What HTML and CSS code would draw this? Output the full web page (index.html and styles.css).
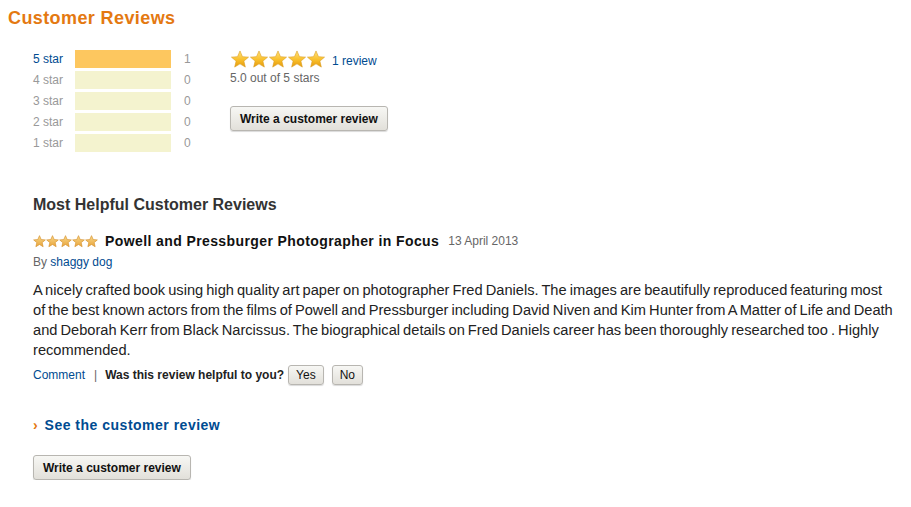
FILE: index.html
```html
<!DOCTYPE html>
<html lang="en">

<head>
    <meta charset="UTF-8">
    <title>Customer Reviews</title>
    <link rel="stylesheet" href="styles.css">
</head>

<body>
    <svg width="0" height="0" class="defs">
        <defs>
            <linearGradient id="star-big" x1="0" y1="0" x2="0" y2="1">
                <stop offset="0" stop-color="#ffe27a" />
                <stop offset="0.55" stop-color="#f9bf2b" />
                <stop offset="1" stop-color="#e39a0d" />
            </linearGradient>
            <linearGradient id="star-small" x1="0" y1="0" x2="0" y2="1">
                <stop offset="0" stop-color="#f8d98a" />
                <stop offset="1" stop-color="#e9a43c" />
            </linearGradient>
            <path id="star" d="M10 1 L12.6 7 L19 7.5 L14.1 11.7 L15.6 18 L10 14.6 L4.4 18 L5.9 11.7 L1 7.5 L7.4 7 Z" />
        </defs>
    </svg>

    <h1 class="title">Customer Reviews</h1>

    <div class="summary">
        <table class="histogram">
            <tr class="active">
                <td class="label"><a href="#">5 star</a></td>
                <td><div class="bar"><div class="fill" style="width: 100%"></div></div></td>
                <td class="count">1</td>
            </tr>
            <tr>
                <td class="label">4 star</td>
                <td><div class="bar"></div></td>
                <td class="count">0</td>
            </tr>
            <tr>
                <td class="label">3 star</td>
                <td><div class="bar"></div></td>
                <td class="count">0</td>
            </tr>
            <tr>
                <td class="label">2 star</td>
                <td><div class="bar"></div></td>
                <td class="count">0</td>
            </tr>
            <tr>
                <td class="label">1 star</td>
                <td><div class="bar"></div></td>
                <td class="count">0</td>
            </tr>
        </table>

        <div class="overall">
            <div class="overall-top">
                <svg class="stars-big" width="96" height="19" viewBox="0 0 100 20">
                    <use href="#star" x="0" fill="url(#star-big)" stroke="#d99a1a" stroke-width="0.6" />
                    <use href="#star" x="20" fill="url(#star-big)" stroke="#d99a1a" stroke-width="0.6" />
                    <use href="#star" x="40" fill="url(#star-big)" stroke="#d99a1a" stroke-width="0.6" />
                    <use href="#star" x="60" fill="url(#star-big)" stroke="#d99a1a" stroke-width="0.6" />
                    <use href="#star" x="80" fill="url(#star-big)" stroke="#d99a1a" stroke-width="0.6" />
                </svg>
                <a href="#" class="review-count">1 review</a>
            </div>
            <div class="out-of">5.0 out of 5 stars</div>
            <button class="btn btn-large">Write a customer review</button>
        </div>
    </div>

    <h2 class="subtitle">Most Helpful Customer Reviews</h2>

    <div class="review">
        <div class="review-head">
            <svg class="stars-small" width="65" height="13" viewBox="0 0 100 20">
                <use href="#star" x="0" fill="url(#star-small)" stroke="#d58f2a" stroke-width="1" />
                <use href="#star" x="20" fill="url(#star-small)" stroke="#d58f2a" stroke-width="1" />
                <use href="#star" x="40" fill="url(#star-small)" stroke="#d58f2a" stroke-width="1" />
                <use href="#star" x="60" fill="url(#star-small)" stroke="#d58f2a" stroke-width="1" />
                <use href="#star" x="80" fill="url(#star-small)" stroke="#d58f2a" stroke-width="1" />
            </svg>
            <span class="review-title">Powell and Pressburger Photographer in Focus</span>
            <span class="review-date">13 April 2013</span>
        </div>
        <div class="byline">By <a href="#">shaggy dog</a></div>
        <p class="review-text">A nicely crafted book using high quality art paper on photographer Fred Daniels. The images are beautifully reproduced featuring most of the best known actors from the films of Powell and Pressburger including David Niven and Kim Hunter from A Matter of Life and Death and Deborah Kerr from Black Narcissus. The biographical details on Fred Daniels career has been thoroughly researched too . Highly recommended.</p>
        <div class="review-actions">
            <a href="#">Comment</a>
            <span class="sep">|</span>
            <span class="helpful">Was this review helpful to you?</span>
            <button class="btn btn-small">Yes</button>
            <button class="btn btn-small">No</button>
        </div>
    </div>

    <a href="#" class="see-all"><span class="arrow">›</span> See the customer review</a>

    <button class="btn btn-large btn-bottom">Write a customer review</button>
</body>

</html>
```

FILE: styles.css
```css
:root {
    --orange: #e47911;
    --link: #004b91;
    --text: #333333;
    --muted: #999999;
}

body {
    font-family: Arial, "Liberation Sans", sans-serif;
    font-size: 13px;
    color: var(--text);
    background: #ffffff;
    margin: 0;
    padding: 8px 8px 0 8px;
}

a {
    color: var(--link);
    text-decoration: none;
}

.defs {
    position: absolute;
}

.title {
    font-size: 18px;
    letter-spacing: 0.4px;
    color: var(--orange);
    margin: 0;
    line-height: 20px;
}

.summary {
    display: flex;
    align-items: flex-start;
    padding-left: 25px;
    margin-top: 22px;
}

.histogram {
    border-collapse: collapse;
}

.histogram td {
    padding: 0 0 3px 0;
    height: 18px;
    font-size: 12px;
    color: var(--muted);
}

.histogram .label {
    width: 42px;
    vertical-align: middle;
}

.histogram .count {
    padding-left: 13px;
    width: 46px;
}

.bar {
    width: 96px;
    height: 18px;
    background: #f4f3cf;
}

.fill {
    height: 100%;
    background: #fdc75f;
}

.overall {
    font-size: 12px;
    color: #666666;
}

.overall-top {
    display: flex;
    align-items: center;
    gap: 6px;
}

.stars-big {
    display: block;
}

.review-count {
    font-size: 12px;
    padding-top: 3px;
}

.out-of {
    margin-top: 2px;
}

.btn {
    font-family: Arial, "Liberation Sans", sans-serif;
    color: #111111;
    border: 1px solid #b8b6b1;
    border-radius: 3px;
    background: linear-gradient(#f7f7f4, #e2e0da);
    box-shadow: 0 1px 1px rgba(0, 0, 0, 0.15);
    cursor: pointer;
}

.btn-large {
    display: block;
    font-size: 12px;
    font-weight: bold;
    height: 25px;
    padding: 0 9px;
    margin-top: 21px;
}

.subtitle {
    font-size: 16px;
    margin: 41px 0 0 25px;
    color: var(--text);
}

.review {
    margin-left: 25px;
}

.review-head {
    display: flex;
    align-items: center;
    margin-top: 19px;
}

.stars-small {
    display: block;
    margin-right: 7px;
}

.review-title {
    font-size: 14px;
    font-weight: bold;
    letter-spacing: 0.4px;
    color: #111111;
}

.review-date {
    font-size: 12px;
    color: #666666;
    margin-left: 9px;
}

.byline {
    font-size: 12px;
    color: #666666;
    margin-top: 6px;
}

.review-text {
    margin: 11px 0 0 0;
    font-size: 14.65px;
    word-spacing: -1px;
    line-height: 20px;
    color: #222222;
    max-width: 863px;
}

.review-actions {
    display: flex;
    align-items: center;
    font-size: 12px;
    margin-top: 5px;
}

.sep {
    color: #666666;
    margin: 0 8px 0 9px;
}

.helpful {
    font-weight: bold;
    color: #222222;
    margin-right: 4px;
}

.btn-small {
    font-size: 12px;
    height: 20px;
    padding: 0 7px;
    margin-right: 8px;
}

.see-all {
    display: block;
    margin: 32px 0 0 25px;
    font-size: 14px;
    font-weight: bold;
    letter-spacing: 0.5px;
}

.see-all .arrow {
    color: var(--orange);
    margin-right: 2px;
}

.btn-bottom {
    margin: 22px 0 0 25px;
}
```
